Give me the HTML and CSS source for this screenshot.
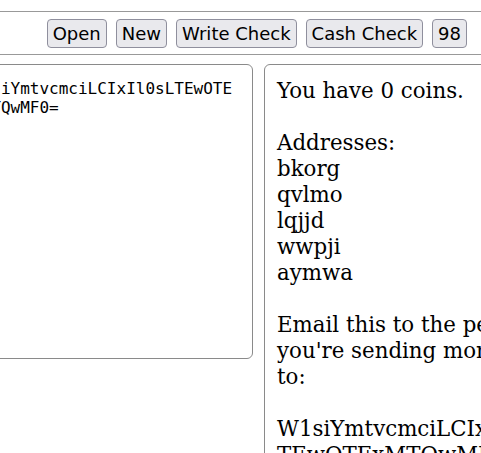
FILE: index.html
```html
<!DOCTYPE html>
<html>
<head>
<meta charset="utf-8">
<link rel="stylesheet" href="styles.css">
</head>
<body>
<div class="toolbar">
  <button class="btn">Open</button>
  <button class="btn">New</button>
  <button class="btn">Write Check</button>
  <button class="btn">Cash Check</button>
  <button class="btn">98</button>
</div>
<div class="main">
  <textarea class="check" id="check" spellcheck="false" autofocus>W1siYmtvcmciLCIxIl0sLTEwOTExMTQwMF0=</textarea>
  <div class="info">You have 0 coins.

Addresses:
bkorg
qvlmo
lqjjd
wwpji
aymwa

Email this to the person you're sending money to:

W1siYmtvcmciLCIxIl0sLTEwOTExMTQwMF0=</div>
</div>
<script src="script.js"></script>
</body>
</html>
```

FILE: styles.css
```css
html, body {
  margin: 0;
  padding: 0;
  background: #fff;
  overflow: hidden;
}
.toolbar {
  margin-top: 11px;
  border-top: 1px solid #999;
  border-bottom: 1px solid #999;
  padding: 7px 14px 6px;
  display: flex;
  justify-content: flex-end;
  gap: 9px;
}
.btn {
  font-family: "DejaVu Sans", sans-serif;
  font-size: 18px;
  line-height: 21px;
  padding: 3px 5px;
  margin: 0;
  color: #000;
  background: #e9e9ed;
  border: 1px solid #8f8f9d;
  border-radius: 4px;
}
.main {
  margin-top: 9px;
  margin-left: -42px;
  display: flex;
  align-items: flex-start;
  gap: 11px;
}
.check {
  flex: none;
  box-sizing: border-box;
  width: 295px;
  height: 295px;
  margin: 0;
  padding: 14px 14px 14px 13px;
  font-family: "DejaVu Sans Mono", monospace;
  font-size: 16px;
  line-height: normal;
  color: #000;
  caret-color: #000;
  border: 1px solid #8a8a8a;
  border-radius: 6px;
  resize: none;
  outline: none;
  overflow: hidden;
}
.info {
  flex: none;
  box-sizing: border-box;
  width: 295px;
  padding: 13px 12px 12px 12px;
  font-family: "DejaVu Serif", serif;
  font-size: 21.33px;
  line-height: 26px;
  color: #000;
  white-space: pre-wrap;
  overflow-wrap: break-word;
  border: 1px solid #8a8a8a;
  border-radius: 6px;
}
```

FILE: script.js
```js
var t = document.getElementById('check');
t.focus();
t.setSelectionRange(t.value.length, t.value.length);
```
